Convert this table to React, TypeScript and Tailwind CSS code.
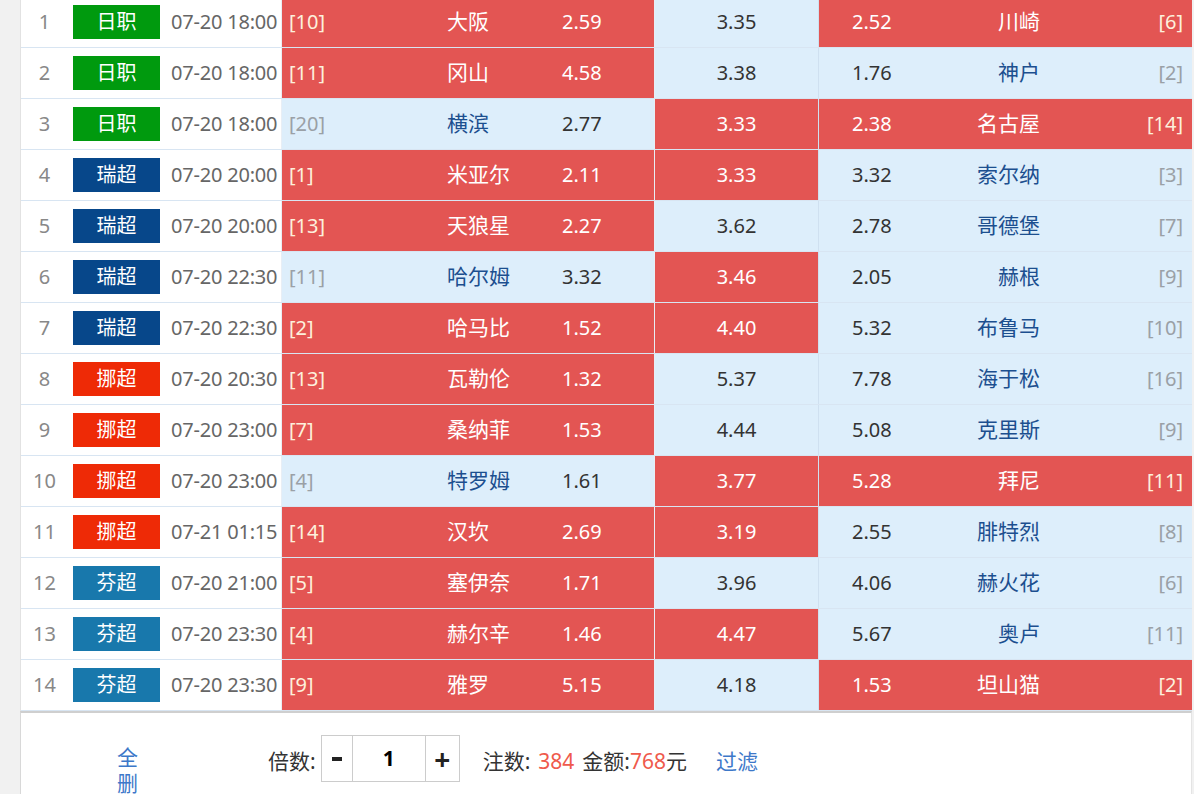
import React from "react";

// ── data ──────────────────────────────────────────────────────────────────────

type Hit = "r" | "b";

interface Match {
  league: "日职" | "瑞超" | "挪超" | "芬超";
  time: string;
  homeRank: string;
  home: string;
  homeOdds: string;
  draw: string;
  awayOdds: string;
  away: string;
  awayRank: string;
  hit: [Hit, Hit, Hit];
}

const MATCHES: Match[] = [
  { league: "日职", time: "07-20 18:00", homeRank: "[10]", home: "大阪", homeOdds: "2.59", draw: "3.35", awayOdds: "2.52", away: "川崎", awayRank: "[6]", hit: ["r", "b", "r"] },
  { league: "日职", time: "07-20 18:00", homeRank: "[11]", home: "冈山", homeOdds: "4.58", draw: "3.38", awayOdds: "1.76", away: "神户", awayRank: "[2]", hit: ["r", "b", "b"] },
  { league: "日职", time: "07-20 18:00", homeRank: "[20]", home: "横滨", homeOdds: "2.77", draw: "3.33", awayOdds: "2.38", away: "名古屋", awayRank: "[14]", hit: ["b", "r", "r"] },
  { league: "瑞超", time: "07-20 20:00", homeRank: "[1]", home: "米亚尔", homeOdds: "2.11", draw: "3.33", awayOdds: "3.32", away: "索尔纳", awayRank: "[3]", hit: ["r", "r", "b"] },
  { league: "瑞超", time: "07-20 20:00", homeRank: "[13]", home: "天狼星", homeOdds: "2.27", draw: "3.62", awayOdds: "2.78", away: "哥德堡", awayRank: "[7]", hit: ["r", "b", "b"] },
  { league: "瑞超", time: "07-20 22:30", homeRank: "[11]", home: "哈尔姆", homeOdds: "3.32", draw: "3.46", awayOdds: "2.05", away: "赫根", awayRank: "[9]", hit: ["b", "r", "b"] },
  { league: "瑞超", time: "07-20 22:30", homeRank: "[2]", home: "哈马比", homeOdds: "1.52", draw: "4.40", awayOdds: "5.32", away: "布鲁马", awayRank: "[10]", hit: ["r", "r", "b"] },
  { league: "挪超", time: "07-20 20:30", homeRank: "[13]", home: "瓦勒伦", homeOdds: "1.32", draw: "5.37", awayOdds: "7.78", away: "海于松", awayRank: "[16]", hit: ["r", "b", "b"] },
  { league: "挪超", time: "07-20 23:00", homeRank: "[7]", home: "桑纳菲", homeOdds: "1.53", draw: "4.44", awayOdds: "5.08", away: "克里斯", awayRank: "[9]", hit: ["r", "b", "b"] },
  { league: "挪超", time: "07-20 23:00", homeRank: "[4]", home: "特罗姆", homeOdds: "1.61", draw: "3.77", awayOdds: "5.28", away: "拜尼", awayRank: "[11]", hit: ["b", "r", "r"] },
  { league: "挪超", time: "07-21 01:15", homeRank: "[14]", home: "汉坎", homeOdds: "2.69", draw: "3.19", awayOdds: "2.55", away: "腓特烈", awayRank: "[8]", hit: ["r", "r", "b"] },
  { league: "芬超", time: "07-20 21:00", homeRank: "[5]", home: "塞伊奈", homeOdds: "1.71", draw: "3.96", awayOdds: "4.06", away: "赫火花", awayRank: "[6]", hit: ["r", "b", "b"] },
  { league: "芬超", time: "07-20 23:30", homeRank: "[4]", home: "赫尔辛", homeOdds: "1.46", draw: "4.47", awayOdds: "5.67", away: "奥卢", awayRank: "[11]", hit: ["r", "r", "b"] },
  { league: "芬超", time: "07-20 23:30", homeRank: "[9]", home: "雅罗", homeOdds: "5.15", draw: "4.18", awayOdds: "1.53", away: "坦山猫", awayRank: "[2]", hit: ["r", "b", "r"] },
];

const leagueColor = {
  日职: "bg-[#009a0e]",
  瑞超: "bg-[#07478a]",
  挪超: "bg-[#ee2a06]",
  芬超: "bg-[#1878ac]",
} as const;

// ── cell styles ───────────────────────────────────────────────────────────────

const cellBg = (h: Hit) => (h === "r" ? "bg-[#e35553]" : "bg-[#ddeefb]");
const rankColor = (h: Hit) => (h === "r" ? "text-[#fdf0dc]" : "text-[#9aa0a6]");
const nameColor = (h: Hit) => (h === "r" ? "text-white" : "text-[#1c4f8f]");
const oddsColor = (h: Hit) => (h === "r" ? "text-white" : "text-[#333333]");

function MatchRow({ m, idx }: { m: Match; idx: number }) {
  const [h, d, a] = m.hit;
  return (
    <div className="flex h-[51px] border-b border-[#d8e5f2]">
      <div className="w-[47px] flex items-center justify-center text-[#888888]">
        {idx + 1}
      </div>
      <div className="w-[103px] flex items-center">
        <span
          className={`ml-[5px] w-[87px] h-[34px] flex items-center justify-center text-white text-[20px] ${leagueColor[m.league]}`}
        >
          {m.league}
        </span>
      </div>
      <div className="w-[110px] flex items-center text-[#666666] whitespace-nowrap tracking-[-0.2px]">
        {m.time}
      </div>

      {/* home */}
      <div className={`w-[373px] flex items-center border-l border-[#e8eef5] ${cellBg(h)}`}>
        <span className={`pl-[7px] w-[165px] ${rankColor(h)}`}>{m.homeRank}</span>
        <span className={`w-[115px] text-[21px] ${nameColor(h)}`}>{m.home}</span>
        <span className={oddsColor(h)}>{m.homeOdds}</span>
      </div>

      {/* draw */}
      <div
        className={`w-[164px] flex items-center justify-center border-l border-[#e8eef5] ${cellBg(d)} ${oddsColor(d)}`}
      >
        {m.draw}
      </div>

      {/* away */}
      <div className={`flex-1 flex items-center border-l border-[#cfe0f0] ${cellBg(a)}`}>
        <span className={`pl-[33px] w-[94px] ${oddsColor(a)}`}>{m.awayOdds}</span>
        <span className={`flex-1 text-right text-[21px] ${nameColor(a)}`}>{m.away}</span>
        <span className={`w-[152px] pr-[9px] text-right ${rankColor(a)}`}>{m.awayRank}</span>
      </div>
    </div>
  );
}

export default function App() {
  return (
    <div
      className="w-[1194px] h-[794px] overflow-hidden bg-[#f1f1f1] text-[20px]"
      style={{ fontFamily: '"Noto Sans", "Noto Sans CJK SC", sans-serif' }}
    >
      <div className="ml-[20px] w-[1172px] -mt-[3px] bg-white border-l border-[#e2e2e2]">
        {MATCHES.map((m, i) => (
          <MatchRow key={i} m={m} idx={i} />
        ))}
      </div>

      {/* bottom bar */}
      <div className="ml-[20px] w-[1172px] h-[120px] bg-white border-t-2 border-[#cfcfcf] border-l border-r border-l-[#d8d8d8] border-r-[#e4e4e4] flex items-start text-[21px]">
        <div className="ml-[96px] mt-[31px] w-[24px] leading-[26px] text-[#3d78c9]">全删</div>
        <div className="ml-[127px] mt-[22px] flex items-center h-[47px] text-[#333333]">
          <span className="mt-[6px]">倍数:</span>
          <div className="ml-[5px] flex h-[47px] border border-[#cccccc]">
            <span className="w-[30px] flex items-center justify-center">
              <span className="block w-[10px] h-[4px] bg-[#222222]" />
            </span>
            <span className="w-[74px] flex items-center justify-center border-l border-r border-[#cccccc] font-bold text-black">1</span>
            <span className="w-[33px] flex items-center justify-center text-[28px] font-bold text-[#222222]">+</span>
          </div>
          <span className="ml-[23px] mt-[6px]">注数:</span>
          <span className="ml-[8px] mt-[6px] text-[#ef5a4c]">384</span>
          <span className="ml-[8px] mt-[6px]">金额:</span>
          <span className="mt-[6px] text-[#ef5a4c]">768</span>
          <span className="mt-[6px]">元</span>
          <span className="ml-[29px] mt-[6px] text-[#3d78c9]">过滤</span>
        </div>
      </div>
    </div>
  );
}
